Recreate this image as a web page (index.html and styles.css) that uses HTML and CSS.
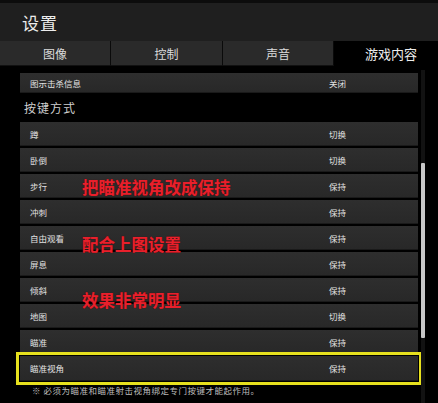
FILE: index.html
```html
<!DOCTYPE html>
<html lang="zh-CN">
<head>
<meta charset="utf-8">
<title>设置</title>
<link rel="stylesheet" href="styles.css">
</head>
<body>
<div class="screen">
  <header class="topbar">
    <h1 class="title">设置</h1>
  </header>
  <nav class="tabs">
    <div class="tab">图像</div>
    <div class="tab">控制</div>
    <div class="tab">声音</div>
    <div class="tab active">游戏内容</div>
  </nav>
  <main class="body">
    <section class="list">
      <div class="row short"><span class="label">图示击杀信息</span><span class="value">关闭</span></div>
      <h2 class="group">按键方式</h2>
      <div class="row"><span class="label">蹲</span><span class="value">切换</span></div>
      <div class="row"><span class="label">卧倒</span><span class="value">切换</span></div>
      <div class="row"><span class="label">步行</span><span class="value">保持</span></div>
      <div class="row"><span class="label">冲刺</span><span class="value">保持</span></div>
      <div class="row"><span class="label">自由观看</span><span class="value">保持</span></div>
      <div class="row"><span class="label">屏息</span><span class="value">保持</span></div>
      <div class="row"><span class="label">倾斜</span><span class="value">保持</span></div>
      <div class="row"><span class="label">地图</span><span class="value">切换</span></div>
      <div class="row"><span class="label">瞄准</span><span class="value">保持</span></div>
      <div class="row selected"><span class="label">瞄准视角</span><span class="value">保持</span></div>
      <p class="note">※ 必须为瞄准和瞄准射击视角绑定专门按键才能起作用。</p>
    </section>
    <div class="track"><div class="thumb"></div></div>
  </main>
  <p class="mark mark-1">把瞄准视角改成保持</p>
  <p class="mark mark-2">配合上图设置</p>
  <p class="mark mark-3">效果非常明显</p>
</div>
</body>
</html>
```

FILE: styles.css
```css
* {
  box-sizing: border-box;
}

html, body {
  margin: 0;
  padding: 0;
  background: #000;
}

body {
  font-family: "Noto Sans CJK SC", "Noto Sans", sans-serif;
  color: #ddd;
}

.screen {
  position: relative;
  width: 438px;
  height: 403px;
  overflow: hidden;
  background: #000;
}

/* title bar */
.topbar {
  height: 41px;
  background: #1f1f1f;
  border-top: 3px solid #0c0c0c;
  display: flex;
  align-items: center;
  padding-left: 22px;
}

.title {
  margin: 0;
  font-size: 17px;
  font-weight: 400;
  line-height: 1;
  color: #ececec;
  letter-spacing: 1px;
}

/* tab strip */
.tabs {
  display: grid;
  grid-template-columns: 111px 112px 111px 1fr;
  height: 25px;
  background: #000;
}

.tab {
  display: flex;
  align-items: center;
  justify-content: center;
  font-size: 12px;
  color: #dcdcdc;
  background: #2a2a2a;
  border-right: 1px solid #0a0a0a;
  border-bottom: 1px solid #111;
}

.tab.active {
  background: #000;
  border: none;
  color: #eee;
  font-size: 13px;
  padding-left: 10px;
}

/* settings list */
.body {
  display: flex;
  padding-left: 20px;
}

.list {
  width: 398px;
  padding-top: 7px;
}

.row {
  display: grid;
  grid-template-columns: 309px 1fr;
  align-items: center;
  height: 24px;
  margin-bottom: 2px;
  background: linear-gradient(#2e2e2e, #282828);
  border-bottom: 1px solid #1a1a1a;
  font-size: 8.5px;
  color: #e2e2e2;
}

.row.short {
  height: 20px;
  margin-bottom: 0;
}

.label {
  padding-left: 10px;
}

.value {
  padding-left: 0;
}

.row.selected {
  outline: 3px solid #e6e01e;
  outline-offset: 1px;
  height: 25px;
}

.group {
  margin: 0;
  height: 29px;
  padding: 8px 0 0 4px;
  font-size: 12px;
  font-weight: 400;
  line-height: 14px;
  color: #cfcfcf;
  letter-spacing: 1px;
}

.note {
  margin: 4px 0 0 12px;
  font-size: 8.5px;
  line-height: 10px;
  color: #bdbdbd;
  letter-spacing: 0.5px;
}

/* scroll track */
.track {
  width: 4px;
  margin-left: 3px;
  margin-top: 4px;
  height: 333px;
  background: #121212;
  position: relative;
}

.thumb {
  position: absolute;
  left: 0;
  top: 93px;
  width: 4px;
  height: 175px;
  background: #c8c8c8;
  border-radius: 1px;
}

/* red annotations drawn over the list */
.mark {
  position: absolute;
  left: 82px;
  margin: 0;
  font-size: 16.5px;
  font-weight: 700;
  line-height: 17px;
  color: #e8202c;
  text-shadow: 0 0 1px #500;
  white-space: nowrap;
}

.mark-1 { top: 179px; }
.mark-2 { top: 236px; }
.mark-3 { top: 292px; }
```
